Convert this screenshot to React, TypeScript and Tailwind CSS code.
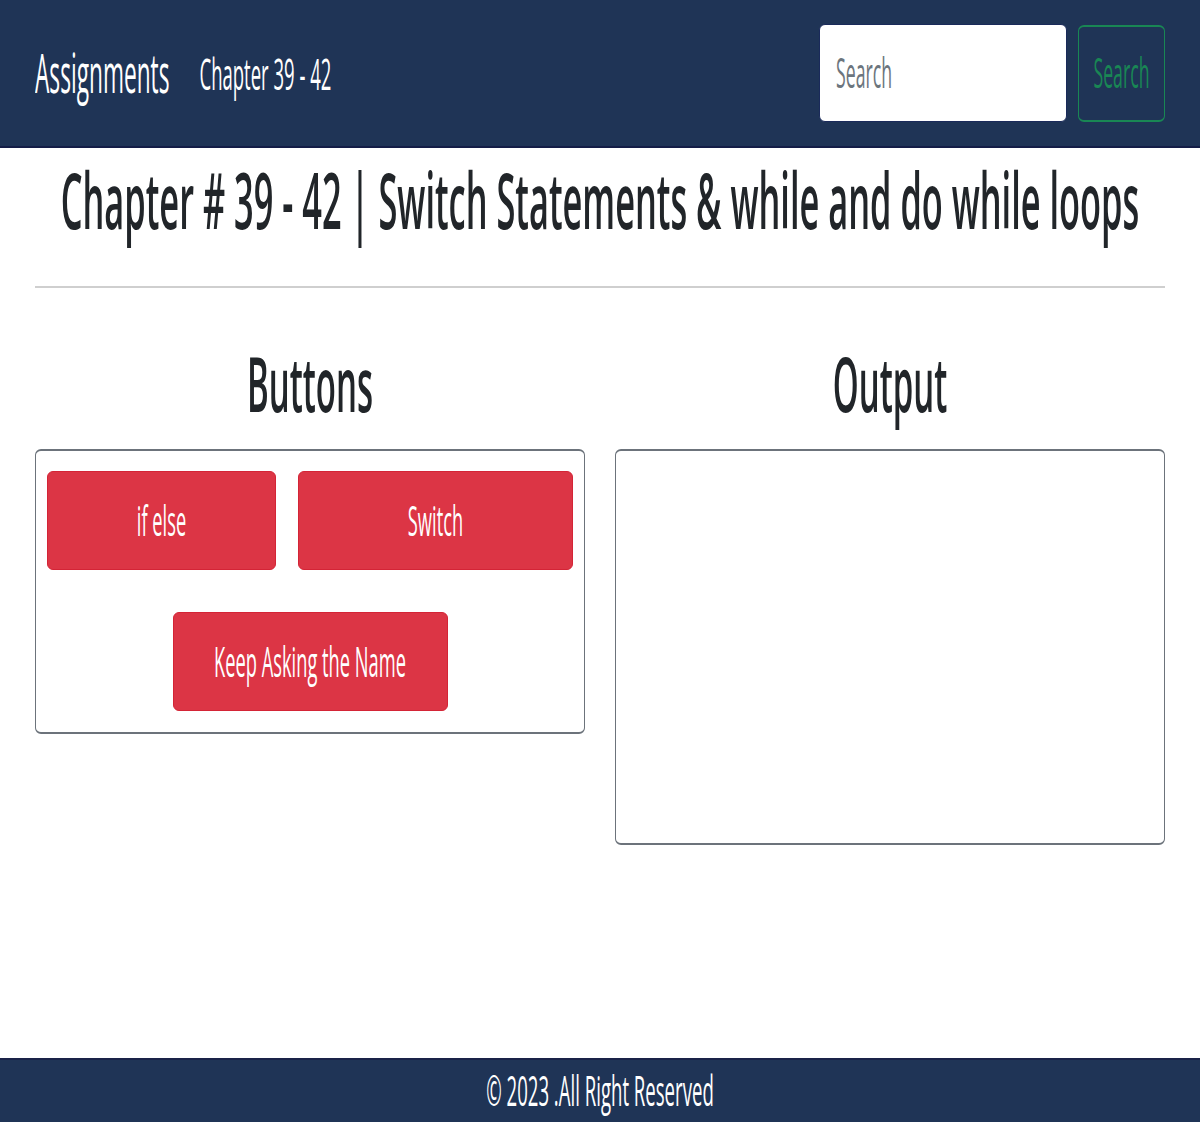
import React from "react";

// The reference is stretched vertically, so glyphs are scaled on the y axis.
function Txt({ className, children }: { className: string; children: React.ReactNode }) {
  return <span className={`inline-block origin-center leading-none whitespace-nowrap ${className}`}>{children}</span>;
}

function RedButton({ label, width }: { label: string; width: string }) {
  return (
    <button
      type="button"
      className={`flex h-[99px] items-center justify-center rounded-[6px] border border-[#d42436] bg-[#dc3545] text-white ${width}`}
    >
      <Txt className="text-[18.3px] scale-y-[2.25]">{label}</Txt>
    </button>
  );
}

export default function App() {
  return (
    <div
      className="flex min-h-[1122px] flex-col bg-white text-[#212529]"
      style={{ fontFamily: '"Open Sans", "Noto Sans", sans-serif' }}
    >
      {/* Navbar */}
      <nav className="flex h-[148px] items-center justify-between border-b-2 border-[#141d47] bg-[#1f3456] px-[35px]">
        <div className="flex items-center gap-[30px] pt-[4px]">
          <a href="#" className="text-white">
            <Txt className="text-[22.7px] scale-y-[2.4]">Assignments</Txt>
          </a>
          <a href="#" className="text-white">
            <Txt className="text-[18.5px] scale-y-[2.4]">Chapter 39 - 42</Txt>
          </a>
        </div>
        <form className="flex items-center gap-[11px]" onSubmit={(e) => e.preventDefault()}>
          <div className="flex h-[98px] w-[248px] items-center rounded-[6px] border border-[#1a2a5a] bg-white px-[16px]">
            <Txt className="text-[17.7px] text-[#6c757d] scale-y-[2.4]">Search</Txt>
          </div>
          <button
            type="submit"
            className="flex h-[97px] w-[87px] items-center justify-center rounded-[6px] border border-[#198754] border-y-2 text-[#198754]"
          >
            <Txt className="text-[17.7px] scale-y-[2.4]">Search</Txt>
          </button>
        </form>
      </nav>

      {/* Main */}
      <main className="flex-1 px-[35px]">
        <div className="flex h-[104px] items-center justify-center">
          <Txt className="text-[34.4px] font-semibold scale-y-[2.28]">
            Chapter # 39 - 42 | Switch Statements &amp; while and do while loops
          </Txt>
        </div>
        <hr className="mt-[34px] border-t-2 border-[#cfcfcf]" />

        <div className="mt-[55px] grid grid-cols-2 gap-[30px]">
          <section>
            <div className="flex h-[80px] items-center justify-center">
              <Txt className="text-[33px] font-semibold scale-y-[2.3]">Buttons</Txt>
            </div>
            <div className="mt-[26px] rounded-[6px] border border-y-2 border-[#6c737b] px-[11px] pb-[21px] pt-[20px]">
              <div className="flex justify-between">
                <RedButton label="if else" width="w-[229px]" />
                <RedButton label="Switch" width="w-[275px]" />
              </div>
              <div className="mt-[42px] flex justify-center">
                <RedButton label="Keep Asking the Name" width="w-[275px]" />
              </div>
            </div>
          </section>
          <section>
            <div className="flex h-[80px] items-center justify-center">
              <Txt className="text-[33px] font-semibold scale-y-[2.3]">Output</Txt>
            </div>
            <div className="mt-[26px] h-[396px] rounded-[6px] border border-y-2 border-[#6c737b]" />
          </section>
        </div>
      </main>

      {/* Footer */}
      <footer className="flex h-[64px] items-center justify-center border-t-2 border-[#1a2348] bg-[#1f3456] text-white">
        <Txt className="text-[18.6px] scale-y-[2.25]">© 2023 .All Right Reserved</Txt>
      </footer>
    </div>
  );
}
